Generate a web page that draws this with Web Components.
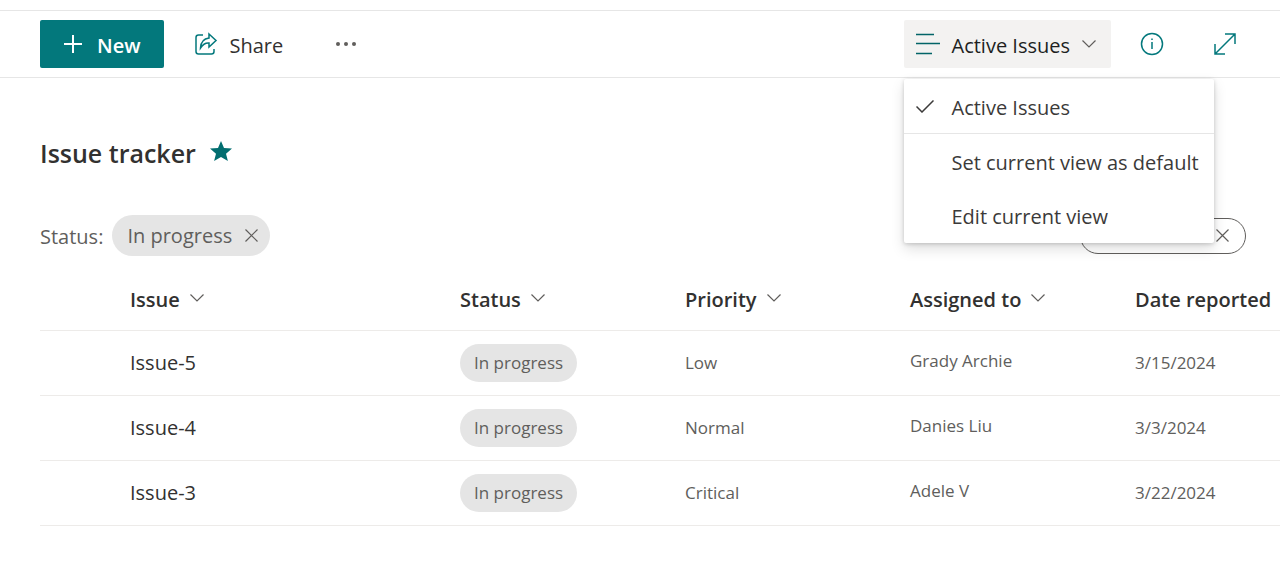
<!DOCTYPE html>
<html lang="en">
<head>
<meta charset="utf-8">
<title>Issue tracker</title>
<style>
html, body { margin: 0; background: #fff; }
body { font-family: "Open Sans", "Noto Sans", sans-serif; font-size: 20px; color: #323130; overflow-x: hidden; }
</style>
</head>
<body>
<issue-page></issue-page>
<script>
const define = (name, html, setup) => {
  const template = document.createElement('template');
  template.innerHTML = html;
  customElements.define(name, class extends HTMLElement {
    constructor() {
      super();
      this.attachShadow({ mode: 'open' }).append(template.content.cloneNode(true));
    }
    connectedCallback() { if (setup) setup(this, this.shadowRoot); }
  });
};

const ICONS = {
  plus: [20, 20, '<path d="M10 1v18M1 10h18" stroke-width="2"/>'],
  share: [24, 24, '<path d="M9 3H4.500Q2 3 2 5.500V19.500Q2 22 4.500 22H17.500Q20 22 20 19.500V17"/><path d="M15 2l7 6.500-7 6.500v-4q-5-.5-8.500 5Q7 7 15 6z"/>'],
  more: [22, 6, '<g fill="#605e5c" stroke="none"><circle cx="3" cy="3" r="2"/><circle cx="11" cy="3" r="2"/><circle cx="19" cy="3" r="2"/></g>'],
  view: [24, 22, '<path stroke="#026467" d="M0 1.500h18M0 10.500h24M0 20.500h16"/>'],
  down: [14, 8, '<path d="M.5 .5L7 7L13.500 .5" stroke-width="1.200"/>'],
  info: [24, 24, '<circle cx="12" cy="12" r="10.500"/><path d="M12 10v7M12 6.500v1.500"/>'],
  expand: [22, 22, '<path d="M1 21L21 1M11 1H21V11M1 11V21H11"/>'],
  check: [18, 13, '<path d="M.5 6.500L6 12L17.500 .5"/>'],
  close: [13, 13, '<path d="M.5 .5l12 12M12.500 .5l-12 12" stroke-width="1.200"/>'],
  star: [22, 20, '<path fill="currentColor" stroke="none" d="M11 0l3 7 8 .5-6 5.200 1.900 7.300L11 16l-6.900 4L6 12.700 0 7.500 8 7z"/>']
};
define('ui-icon', '<style>:host{display:inline-flex;flex:none}svg{display:block}</style>', (el, root) => {
  const [w, h, body] = ICONS[el.getAttribute('name')];
  root.innerHTML += `<svg width="${w}" height="${h}" viewBox="0 0 ${w} ${h}" fill="none" stroke="currentColor" stroke-width="1.500" aria-hidden="true">${body}</svg>`;
});

define('command-button', `
<style>
:host { display: block; }
button { display: flex; align-items: center; gap: 12px; height: 48px; padding: 2px 12px 0; border: 0; border-radius: 2px; background: none; color: inherit; font: inherit; white-space: nowrap; cursor: pointer; }
::slotted(ui-icon) { color: #03787c; margin-bottom: 2px; }
:host([kind=primary]) button { background: #03787c; color: #fff; font-weight: 600; padding: 2px 23px 0; gap: 14px; }
:host([kind=primary]) ::slotted(ui-icon) { color: #fff; }
:host([kind=view]) button { background: #f3f2f1; color: #201f1e; padding: 2px 15px 0 12px; }
:host([kind=view]) ::slotted(ui-icon[name=down]) { color: #605e5c; }
</style>
<button type="button"><slot></slot></button>`, (el, root) => {
  const label = el.getAttribute('label');
  if (label) root.querySelector('button').setAttribute('aria-label', label);
});

define('menu-item', `
<style>
:host { display: block; }
button { display: grid; grid-template-columns: 36px auto; align-items: center; width: 100%; height: 54px; padding: 2px 12px 0; border: 0; background: none; color: #3b3a39; font: inherit; text-align: left; white-space: nowrap; cursor: pointer; }
ui-icon { visibility: hidden; margin-bottom: 2px; }
:host([checked]) ui-icon { visibility: visible; }
:host([checked]) { border-bottom: 1px solid #e6e6e6; }
</style>
<button type="button" role="menuitem"><ui-icon name="check"></ui-icon><span><slot></slot></span></button>`);

define('view-switcher', `
<style>
:host { display: block; position: relative; z-index: 2; }
.menu { position: absolute; top: 59px; left: 0; width: 310px; padding-bottom: 1px; background: #fff; border-radius: 2px; box-shadow: 0 6px 14px rgba(0,0,0,.13), 0 1px 4px rgba(0,0,0,.18); }
</style>
<command-button kind="view"><ui-icon name="view"></ui-icon>Active Issues<ui-icon name="down"></ui-icon></command-button>
<div class="menu" role="menu">
  <menu-item checked>Active Issues</menu-item>
  <menu-item>Set current view as default</menu-item>
  <menu-item>Edit current view</menu-item>
</div>`);

define('command-bar', `
<style>
:host { display: flex; align-items: center; justify-content: space-between; margin-top: 10px; padding: 9px 32px 9px 40px; border: solid #e6e6e6; border-width: 1px 0; }
div { display: flex; align-items: center; }
.start { gap: 18px; }
.start command-button:last-child { margin-left: 10px; }
.end { gap: 17px; }
.tools { gap: 26px; }
</style>
<div class="start">
  <command-button kind="primary"><ui-icon name="plus"></ui-icon>New</command-button>
  <command-button><ui-icon name="share"></ui-icon>Share</command-button>
  <command-button label="More"><ui-icon name="more"></ui-icon></command-button>
</div>
<div class="end">
  <view-switcher></view-switcher>
  <div class="tools">
    <command-button label="Details"><ui-icon name="info"></ui-icon></command-button>
    <command-button label="Expand"><ui-icon name="expand"></ui-icon></command-button>
  </div>
</div>`);

define('list-title', `
<style>
:host { display: flex; align-items: center; gap: 14px; margin: 55px 40px 0; height: 40px; }
h1 { margin: 0; font-size: 25px; line-height: 40px; font-weight: 600; }
ui-icon { color: #026e70; margin-bottom: 4px; }
</style>
<h1><slot></slot></h1><ui-icon name="star"></ui-icon>`);

define('filter-bar', `
<style>
:host { display: flex; align-items: center; margin: 42px 34px 0 40px; color: #605e5c; }
.label { margin-right: 9px; padding-top: 2px; }
.chip { display: flex; align-items: center; gap: 13px; height: 41px; padding: 0 12px 0 15px; border-radius: 21px; background: #e5e5e5; }
button { display: flex; padding: 0; border: 0; background: none; color: inherit; cursor: pointer; }
.search { display: flex; align-items: center; box-sizing: border-box; width: 166px; height: 36px; margin-left: auto; padding: 0 16px; border: 1px solid #605e5c; border-radius: 18px; }
input { flex: 1; min-width: 0; padding: 0; border: 0; outline: 0; background: none; font: inherit; }
</style>
<span class="label">Status:</span>
<span class="chip">In progress<button type="button" aria-label="Remove filter"><ui-icon name="close"></ui-icon></button></span>
<span class="search"><input type="text" aria-label="Search"><button type="button" aria-label="Clear search"><ui-icon name="close"></ui-icon></button></span>`);

define('status-pill', `
<style>:host { display: inline-block; padding: 0 14px; border-radius: 19px; background: #e5e5e5; line-height: 38px; vertical-align: middle; }</style>
<slot></slot>`);

define('issue-table', `
<style>
:host { display: block; margin: 14px 0 0 40px; }
table { width: 100%; table-layout: fixed; border-collapse: separate; border-spacing: 0; }
th, td { box-sizing: border-box; padding: 0; border-bottom: 1px solid #edebe9; text-align: left; white-space: nowrap; }
th { height: 61px; padding-bottom: 2px; font-weight: 600; }
th button { display: flex; align-items: center; gap: 10px; padding: 0; border: 0; background: none; color: inherit; font: inherit; cursor: pointer; }
th ui-icon { color: #605e5c; margin-bottom: 2px; }
td { height: 65px; padding-bottom: 1px; font-size: 17px; color: #605e5c; }
td.name { font-size: 20px; color: #323130; }
td.person { padding-bottom: 6px; }
.gutter { width: 90px; } .wide { width: 330px; } .mid { width: 225px; }
</style>
<table>
  <colgroup><col class="gutter"><col class="wide"><col class="mid"><col class="mid"><col class="mid"><col></colgroup>
  <thead><tr></tr></thead>
  <tbody></tbody>
</table>`, (el, root) => {
  root.querySelector('thead tr').innerHTML = '<th></th>' + ['Issue', 'Status', 'Priority', 'Assigned to'].map(t =>
    `<th scope="col"><button type="button">${t}<ui-icon name="down"></ui-icon></button></th>`).join('') +
    '<th scope="col"><button type="button">Date reported</button></th>';
  root.querySelector('tbody').innerHTML = [
    ['Issue-5', 'Low', 'Grady Archie', '3/15/2024'],
    ['Issue-4', 'Normal', 'Danies Liu', '3/3/2024'],
    ['Issue-3', 'Critical', 'Adele V', '3/22/2024']
  ].map(([name, priority, person, date]) => `<tr><td></td><td class="name">${name}</td><td><status-pill>In progress</status-pill></td><td>${priority}</td><td class="person">${person}</td><td>${date}</td></tr>`).join('');
});

define('issue-page', `
<style>:host { display: flow-root; }</style>
<command-bar></command-bar>
<main>
  <list-title>Issue tracker</list-title>
  <filter-bar></filter-bar>
  <issue-table></issue-table>
</main>`);
</script>
</body>
</html>
